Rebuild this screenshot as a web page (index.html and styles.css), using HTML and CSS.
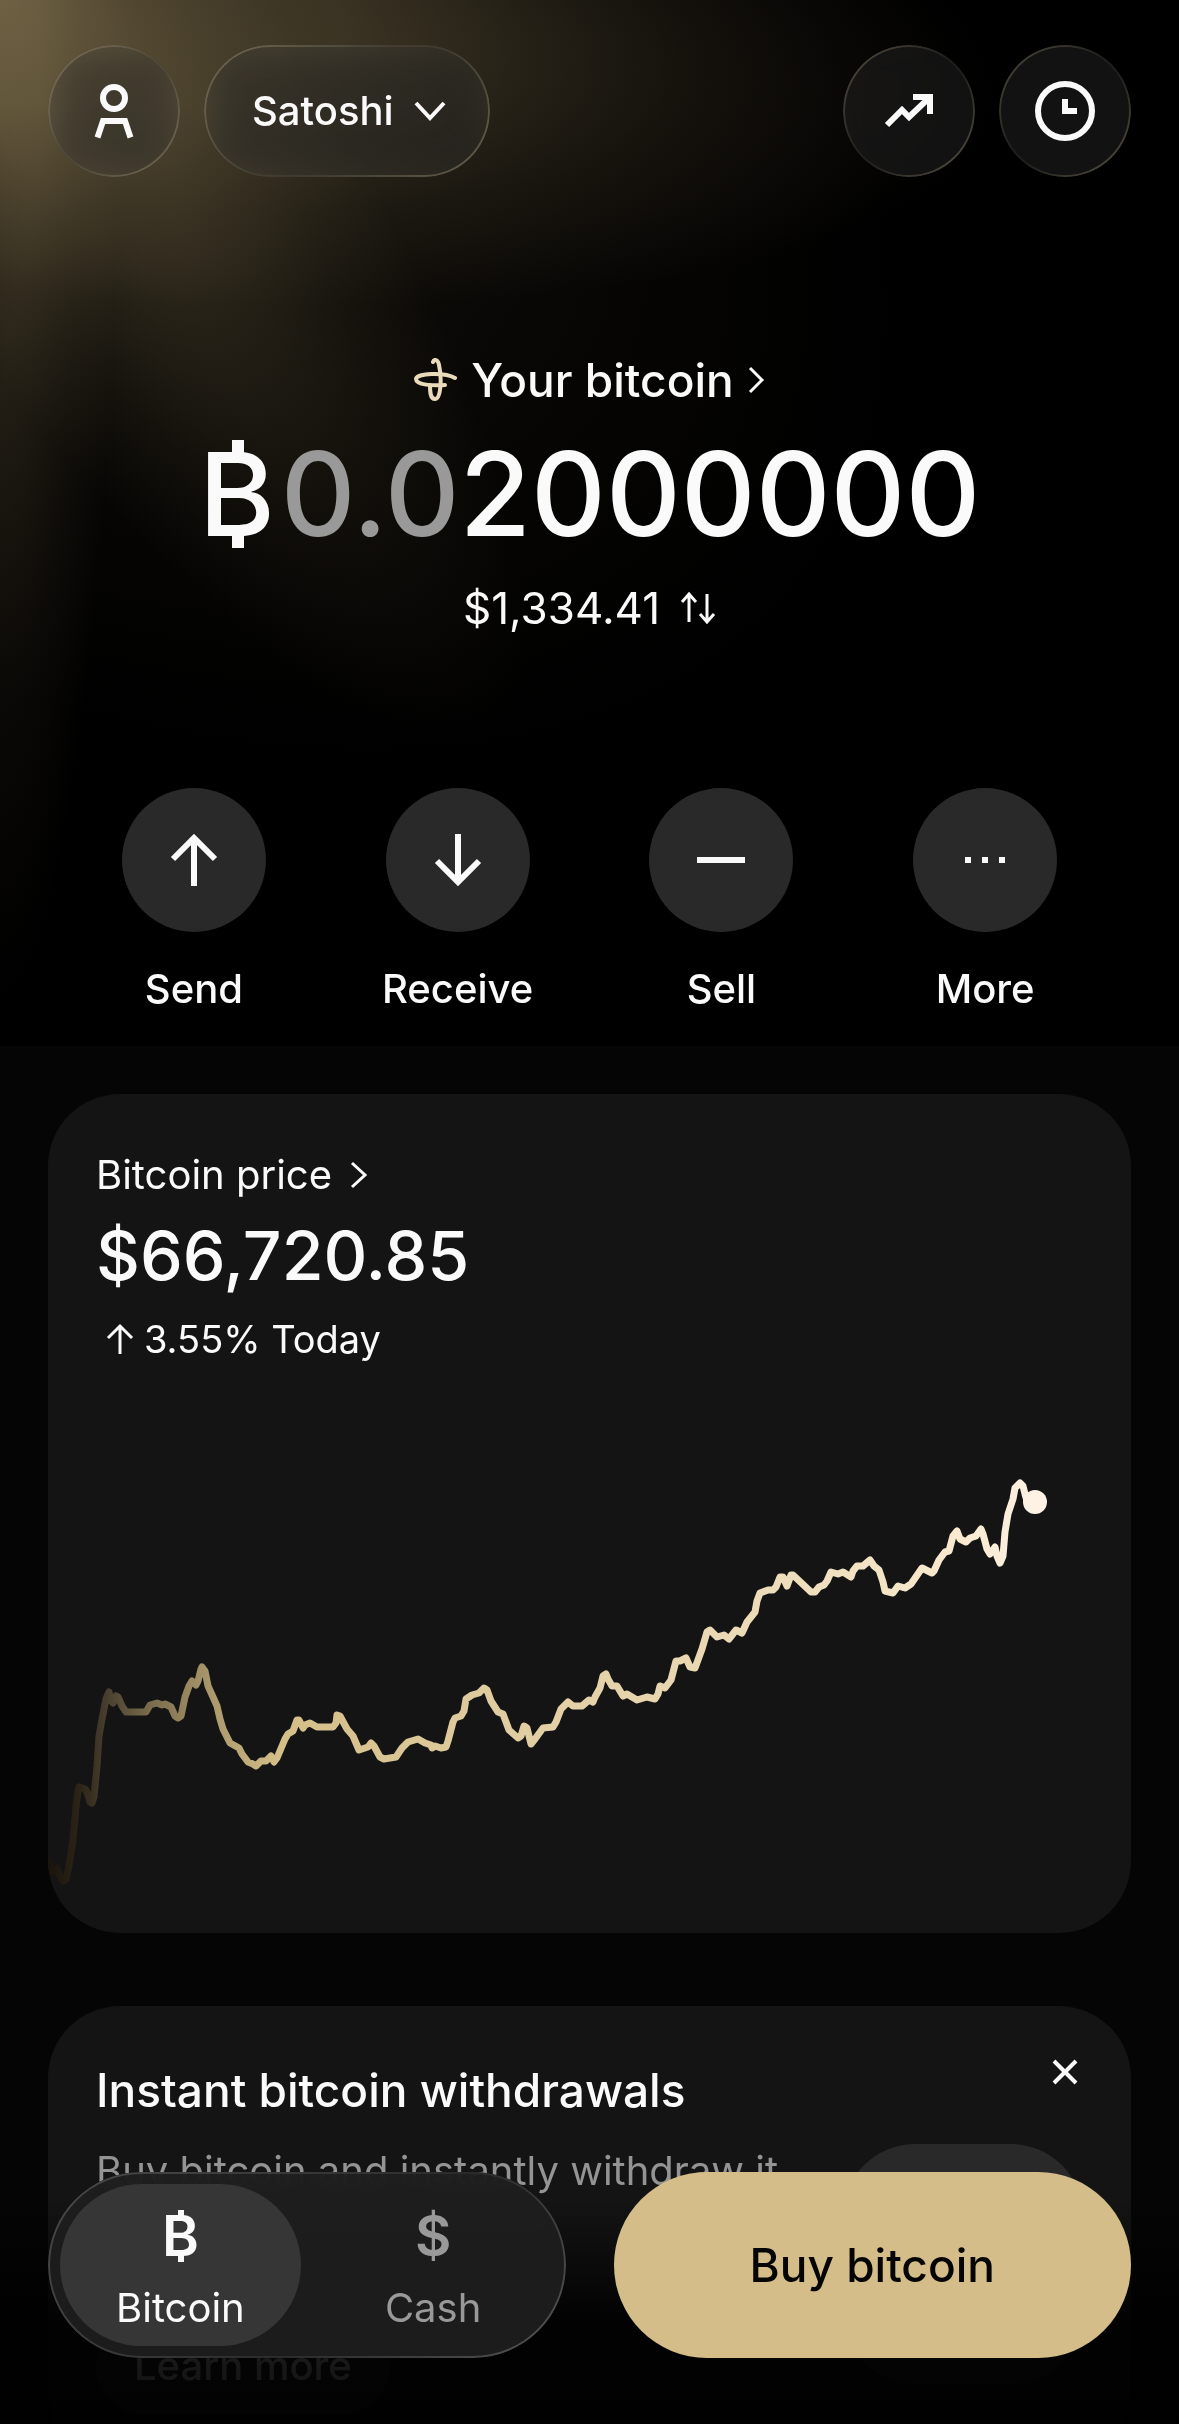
FILE: index.html
```html
<!DOCTYPE html>
<html lang="en">
<head>
    <meta charset="UTF-8">
    <meta name="viewport" content="width=device-width, initial-scale=1.0">
    <title>Bitcoin wallet</title>
    <link rel="stylesheet" href="styles.css">
</head>
<body>
<div class="app">
    <main class="scroller">
        <section class="hero">
            <!-- Gold light in the top left corner -->
            <svg class="glow" viewBox="0 0 1179 1047" preserveAspectRatio="xMinYMin slice" aria-hidden="true">
                <defs>
                    <radialGradient id="ray">
                        <stop offset="0" stop-color="#a08c60" stop-opacity="0.38"/>
                        <stop offset="0.35" stop-color="#a08c60" stop-opacity="0.3"/>
                        <stop offset="0.7" stop-color="#8c7a54" stop-opacity="0.12"/>
                        <stop offset="1" stop-color="#8c7a54" stop-opacity="0"/>
                    </radialGradient>
                </defs>
                <ellipse rx="1000" ry="290" fill="url(#ray)" transform="rotate(6)"/>
                <ellipse rx="880" ry="230" fill="url(#ray)" opacity="0.65" transform="rotate(56)"/>
                <ellipse rx="1000" ry="120" fill="url(#ray)" opacity="0.6" transform="rotate(90)"/>
                <ellipse rx="1000" ry="620" fill="url(#ray)" opacity="0.35" transform="rotate(34)"/>
            </svg>

            <header class="topbar">
                <button type="button" class="glass round" aria-label="Profile">
                    <svg width="40" height="56" viewBox="0 0 40 56" fill="none" stroke="#fafafa" stroke-width="6">
                        <circle cx="20" cy="15" r="11"/>
                        <path d="M3.500 54.500 9 38H31L36.500 54.500"/>
                    </svg>
                </button>
                <button type="button" class="glass account">
                    Satoshi
                    <svg width="32" height="20" viewBox="0 0 32 20" fill="none" stroke="#fafafa" stroke-width="4">
                        <path d="M2 2 16 17 30 2"/>
                    </svg>
                </button>
                <span class="spacer"></span>
                <button type="button" class="glass round" aria-label="Trends">
                    <svg width="50" height="36" viewBox="0 0 50 36" fill="none" stroke="#fafafa" stroke-width="6">
                        <path d="M3 32 18 17 25 24 45 5"/>
                        <path d="M29 4H46V21"/>
                    </svg>
                </button>
                <button type="button" class="glass round" aria-label="History">
                    <svg width="60" height="60" viewBox="0 0 60 60" fill="none" stroke="#fafafa" stroke-width="6">
                        <circle cx="30" cy="30" r="27"/>
                        <path d="M30 18V30H42"/>
                    </svg>
                </button>
            </header>

            <div class="balance">
                <a href="#" class="balance-title">
                    <svg width="44" height="44" viewBox="0 0 44 44" fill="none" stroke="#e9dab9" stroke-width="4" stroke-linecap="round">
                        <path d="M20 4C21 1 25 1 26 7 29 20 28 41 22 41 17 41 17 33 17 27"/>
                        <path d="M42 20C32 14 3 15 3 21 3 27 20 28 32 27"/>
                    </svg>
                    Your bitcoin
                    <svg width="18" height="28" viewBox="0 0 18 28" fill="none" stroke="#fafafa" stroke-width="3">
                        <path d="M2 2 14 14 2 26"/>
                    </svg>
                </a>
                <h1 class="amount"><span class="coin">B</span><span class="dim">0.0</span>2000000</h1>
                <button type="button" class="fiat">
                    $1,334.41
                    <svg width="36" height="34" viewBox="0 0 36 34" fill="none" stroke="#fafafa" stroke-width="3">
                        <path d="M9 31V4M2 11 9 3 16 11"/>
                        <path d="M27 3V30M20 23 27 31 34 23"/>
                    </svg>
                </button>
            </div>

            <nav class="actions">
                <button type="button" class="action">
                    <span class="action-icon">
                        <svg width="48" height="54" viewBox="0 0 48 54" fill="none" stroke="#fafafa" stroke-width="6">
                            <path d="M24 53V6M3 26 24 5 45 26"/>
                        </svg>
                    </span>
                    Send
                </button>
                <button type="button" class="action">
                    <span class="action-icon">
                        <svg width="48" height="54" viewBox="0 0 48 54" fill="none" stroke="#fafafa" stroke-width="6">
                            <path d="M24 1V48M3 28 24 49 45 28"/>
                        </svg>
                    </span>
                    Receive
                </button>
                <button type="button" class="action">
                    <span class="action-icon">
                        <svg width="48" height="6" viewBox="0 0 48 6" fill="#fafafa">
                            <rect width="48" height="6"/>
                        </svg>
                    </span>
                    Sell
                </button>
                <button type="button" class="action">
                    <span class="action-icon">
                        <svg width="40" height="6" viewBox="0 0 40 6" fill="#fafafa">
                            <rect width="6" height="6"/>
                            <rect x="17" width="6" height="6"/>
                            <rect x="34" width="6" height="6"/>
                        </svg>
                    </span>
                    More
                </button>
            </nav>
        </section>

        <section class="feed">
            <article class="card">
                <div class="price">
                    <a href="#" class="price-title">
                        Bitcoin price
                        <svg width="18" height="28" viewBox="0 0 18 28" fill="none" stroke="#fafafa" stroke-width="3">
                            <path d="M2 2 15 14 2 26"/>
                        </svg>
                    </a>
                    <p class="price-value">$66,720.85</p>
                    <p class="price-change">
                        <svg width="28" height="32" viewBox="0 0 28 32" fill="none" stroke="#fafafa" stroke-width="3">
                            <path d="M14 31V3M2 15 14 3 26 15"/>
                        </svg>
                        3.55% Today
                    </p>
                </div>
                <svg class="chart" viewBox="0 0 1083 494" fill="none" role="img" aria-label="Bitcoin price today">
                    <defs>
                        <linearGradient id="line" gradientUnits="userSpaceOnUse" x1="0" y1="0" x2="1000" y2="0">
                            <stop offset="0" stop-color="#19140c"/>
                            <stop offset="0.03" stop-color="#2b2316"/>
                            <stop offset="0.06" stop-color="#4a4030"/>
                            <stop offset="0.1" stop-color="#786a4b"/>
                            <stop offset="0.16" stop-color="#a8966a"/>
                            <stop offset="0.23" stop-color="#d4be88"/>
                            <stop offset="0.5" stop-color="#e2cfa5"/>
                            <stop offset="0.75" stop-color="#efdebc"/>
                            <stop offset="0.9" stop-color="#f8e9ce"/>
                            <stop offset="1" stop-color="#fdf2e3"/>
                        </linearGradient>
                    </defs>
                    <polyline stroke="url(#line)" stroke-width="7" stroke-linejoin="round" stroke-linecap="round" points="
                        0,422 4,433 9,429 12,438 15,442 18,440 21,427 25,400 28,367 30,352 31,348 37,350 39,353 42,363 44,364 46,358
                        49,327 51,297 54,280 58,260 61,253 63,262 65,264 68,257 70,258 74,267 78,273 98,273 102,266 109,264 114,266
                        117,265 123,268 127,277 130,279 133,277 137,258 141,247 144,242 148,246 150,242 153,230 154,228 157,232
                        160,247 165,258 169,267 172,280 175,290 182,304 191,309 194,315 200,323 205,325 208,327 213,322 218,322
                        223,317 226,323 229,319 237,300 240,295 245,292 249,281 251,281 255,289 257,286 262,284 269,288 285,288
                        288,284 289,276 292,277 299,290 305,297 311,311 320,308 323,304 326,307 332,318 336,320 348,318 354,309
                        360,303 370,300 377,304 383,306 384,309 387,307 393,309 398,308 400,302 405,283 407,279 413,277 416,272
                        418,260 424,256 431,254 436,249 439,251 443,262 450,273 455,275 461,291 470,299 473,297 476,287 479,289
                        483,305 487,300 495,289 505,288 508,283 513,270 520,263 525,267 534,267 541,261 545,263 547,258 552,249
                        555,237 558,235 560,240 564,247 569,247 575,257 579,255 589,261 599,258 607,260 610,255 612,247 617,249
                        623,241 628,222 632,222 638,219 642,228 647,229 654,210 659,193 662,191 669,198 676,196 681,200 688,191
                        694,194 699,183 707,173 709,162 712,154 720,151 725,151 728,148 732,138 735,138 739,147 743,136 745,136
                        763,153 767,153 771,148 776,146 779,142 783,133 790,135 795,133 803,138 805,132 809,127 815,127 822,121
                        826,127 831,131 835,143 837,152 845,154 850,147 857,149 863,145 874,129 884,134 886,132 891,121 897,113
                        901,112 905,97 909,92 912,100 918,103 922,99 928,97 933,90 935,95 939,110 942,115 947,108 949,117
                        952,124 955,117 957,93 960,75 965,60 967,49 972,44 975,47 977,55 979,62 987,63"/>
                    <circle cx="987" cy="63" r="12" fill="#fdf2e3"/>
                </svg>
            </article>

            <article class="card promo">
                <div class="promo-head">
                    <h2>Instant bitcoin withdrawals</h2>
                    <button type="button" class="close" aria-label="Close">
                        <svg width="26" height="26" viewBox="0 0 26 26" fill="none" stroke="#fafafa" stroke-width="4">
                            <path d="M2 2 24 24M24 2 2 24"/>
                        </svg>
                    </button>
                </div>
                <div class="promo-body">
                    <div class="promo-text">
                        <p>Buy bitcoin and instantly withdraw it anywhere</p>
                        <button type="button" class="learn">Learn more</button>
                    </div>
                    <div class="promo-thumb"></div>
                </div>
            </article>
        </section>
    </main>

    <footer class="dock">
        <nav class="tabs">
            <button type="button" class="tab active">
                <span class="tab-icon"><span class="coin">B</span></span>
                Bitcoin
            </button>
            <button type="button" class="tab">
                <span class="tab-icon">$</span>
                Cash
            </button>
        </nav>
        <button type="button" class="buy">Buy bitcoin</button>
    </footer>
</div>
</body>
</html>
```
FILE: styles.css
```css
* {
    box-sizing: border-box;
}

body {
    margin: 0;
    background-color: #000;
    color: #fafafa;
    font-family: Inter, "Liberation Sans", sans-serif;
    font-size: 40px;
    line-height: 48px;
}

h1, h2, p {
    margin: 0;
    font-weight: 500;
}

a {
    color: inherit;
    text-decoration: none;
}

button {
    padding: 0;
    border: none;
    background: none;
    color: inherit;
    font: inherit;
    cursor: pointer;
}

svg {
    display: block;
    flex: none;
}

.app {
    position: relative;
    height: 100vh;
    overflow: hidden;
}

.scroller {
    height: 100%;
    overflow-y: auto;
    scrollbar-width: none;
}

/* Hero */

.hero {
    position: relative;
    padding: 45px 48px 33px;
    background-color: #000;
}

.glow {
    position: absolute;
    top: 0;
    left: 0;
    width: 100%;
    height: 100%;
}

.topbar {
    position: relative;
    display: flex;
    gap: 24px;
}

.spacer {
    flex: 1;
}

.glass {
    position: relative;
    display: flex;
    align-items: center;
    justify-content: center;
    height: 132px;
    border-radius: 66px;
    background-color: rgba(255, 255, 255, 0.07);
    backdrop-filter: blur(20px) brightness(0.6);
}

/* Lit rim of the glass, brightest at two opposite corners */
.glass::before,
.tabs::before {
    content: "";
    position: absolute;
    inset: 0;
    padding: 2px;
    border-radius: inherit;
    background: linear-gradient(135deg, rgba(200, 185, 150, 0.35), rgba(200, 185, 150, 0.08) 45%, rgba(200, 185, 150, 0.08) 55%, rgba(200, 185, 150, 0.4));
    mask: linear-gradient(#000 0 0) content-box exclude, linear-gradient(#000 0 0);
    pointer-events: none;
}

.round {
    width: 132px;
}

.account {
    gap: 20px;
    padding: 0 44px 0 48px;
    font-weight: 500;
}

.balance {
    position: relative;
    display: flex;
    flex-direction: column;
    align-items: center;
    gap: 26px;
    margin-top: 175px;
}

.balance-title {
    display: flex;
    align-items: center;
    gap: 14px;
    font-size: 46px;
    line-height: 56px;
    font-weight: 500;
}

.amount {
    font-size: 116px;
    line-height: 120px;
    font-weight: 500;
}

.dim {
    color: #999;
}

/* Letter B with a short bar above and below */
.coin {
    position: relative;
    display: inline-block;
}

.coin::before,
.coin::after {
    content: "";
    position: absolute;
    left: 44%;
    width: 0.1em;
    height: 0.12em;
    background-color: currentColor;
}

.amount .coin {
    margin-right: 6px;
}

.amount .coin::before {
    top: 6px;
}

.amount .coin::after {
    bottom: 6px;
}

.fiat {
    display: flex;
    align-items: center;
    gap: 20px;
    font-size: 44px;
    line-height: 56px;
}

.actions {
    position: relative;
    display: grid;
    grid-template-columns: repeat(4, 1fr);
    margin: 152px 14px 0;
}

.action {
    display: flex;
    flex-direction: column;
    align-items: center;
    gap: 33px;
    font-weight: 500;
}

.action-icon {
    display: flex;
    align-items: center;
    justify-content: center;
    width: 144px;
    height: 144px;
    border-radius: 50%;
    background-color: #292929;
}

/* Cards */

.feed {
    display: flex;
    flex-direction: column;
    gap: 73px;
    padding: 48px 48px 300px;
    background-color: #050505;
}

.card {
    border-radius: 72px;
    background-color: #141414;
    overflow: hidden;
}

.price {
    padding: 57px 48px 76px;
}

.price-title {
    display: flex;
    align-items: center;
    gap: 18px;
}

.price-value {
    margin-top: 16px;
    font-size: 68px;
    line-height: 80px;
}

.price-change {
    display: flex;
    align-items: center;
    gap: 10px;
    margin-top: 20px;
    padding-left: 10px;
    font-size: 38px;
    font-weight: 400;
}

.chart {
    width: 100%;
    height: auto;
}

.promo {
    padding: 48px;
}

.promo-head {
    display: flex;
    align-items: flex-start;
    justify-content: space-between;
}

.promo-head h2 {
    margin-top: 8px;
    font-size: 46px;
    line-height: 56px;
}

.close {
    display: flex;
    align-items: center;
    justify-content: center;
    width: 36px;
    height: 36px;
}

.promo-body {
    display: flex;
    gap: 48px;
    margin-top: 21px;
}

.promo-text {
    flex: 1;
}

.promo-text p {
    color: #949494;
    line-height: 64px;
    font-weight: 400;
}

.learn {
    margin-top: 51px;
    height: 96px;
    padding: 0 38px;
    border-radius: 48px;
    background-color: #292929;
    font-weight: 500;
}

.promo-thumb {
    flex: none;
    width: 240px;
    height: 240px;
    margin-top: 5px;
    border-radius: 72px;
    background-color: #292929;
}

/* Bottom dock */

.dock {
    position: absolute;
    left: 0;
    right: 0;
    bottom: 0;
    display: grid;
    grid-template-columns: 1fr 1fr;
    gap: 48px;
    padding: 48px 48px 66px;
    background: linear-gradient(transparent 25%, rgba(0, 0, 0, 0.88) 65%, rgba(0, 0, 0, 0.94));
}

.tabs,
.buy {
    height: 186px;
    border-radius: 93px;
}

.tabs {
    position: relative;
    display: flex;
    gap: 12px;
    padding: 12px;
    background-color: rgba(30, 30, 30, 0.94);
    backdrop-filter: blur(12px);
}

.tabs::before {
    background: linear-gradient(135deg, #4a4a4a, #333 45%, #2a2a2a 60%, #555);
}

.tab {
    flex: 1;
    display: flex;
    flex-direction: column;
    align-items: center;
    justify-content: flex-end;
    gap: 16px;
    padding-bottom: 14px;
    border-radius: 81px;
    color: #999;
}

.tab.active {
    background-color: #363636;
    color: #fafafa;
}

.tab-icon {
    font-size: 56px;
    line-height: 64px;
    font-weight: 600;
}

.tab-icon .coin::before {
    top: 6px;
}

.tab-icon .coin::after {
    bottom: 6px;
}

.buy {
    background-color: #d4bd88;
    color: #050505;
    font-size: 46px;
    font-weight: 500;
}
```
